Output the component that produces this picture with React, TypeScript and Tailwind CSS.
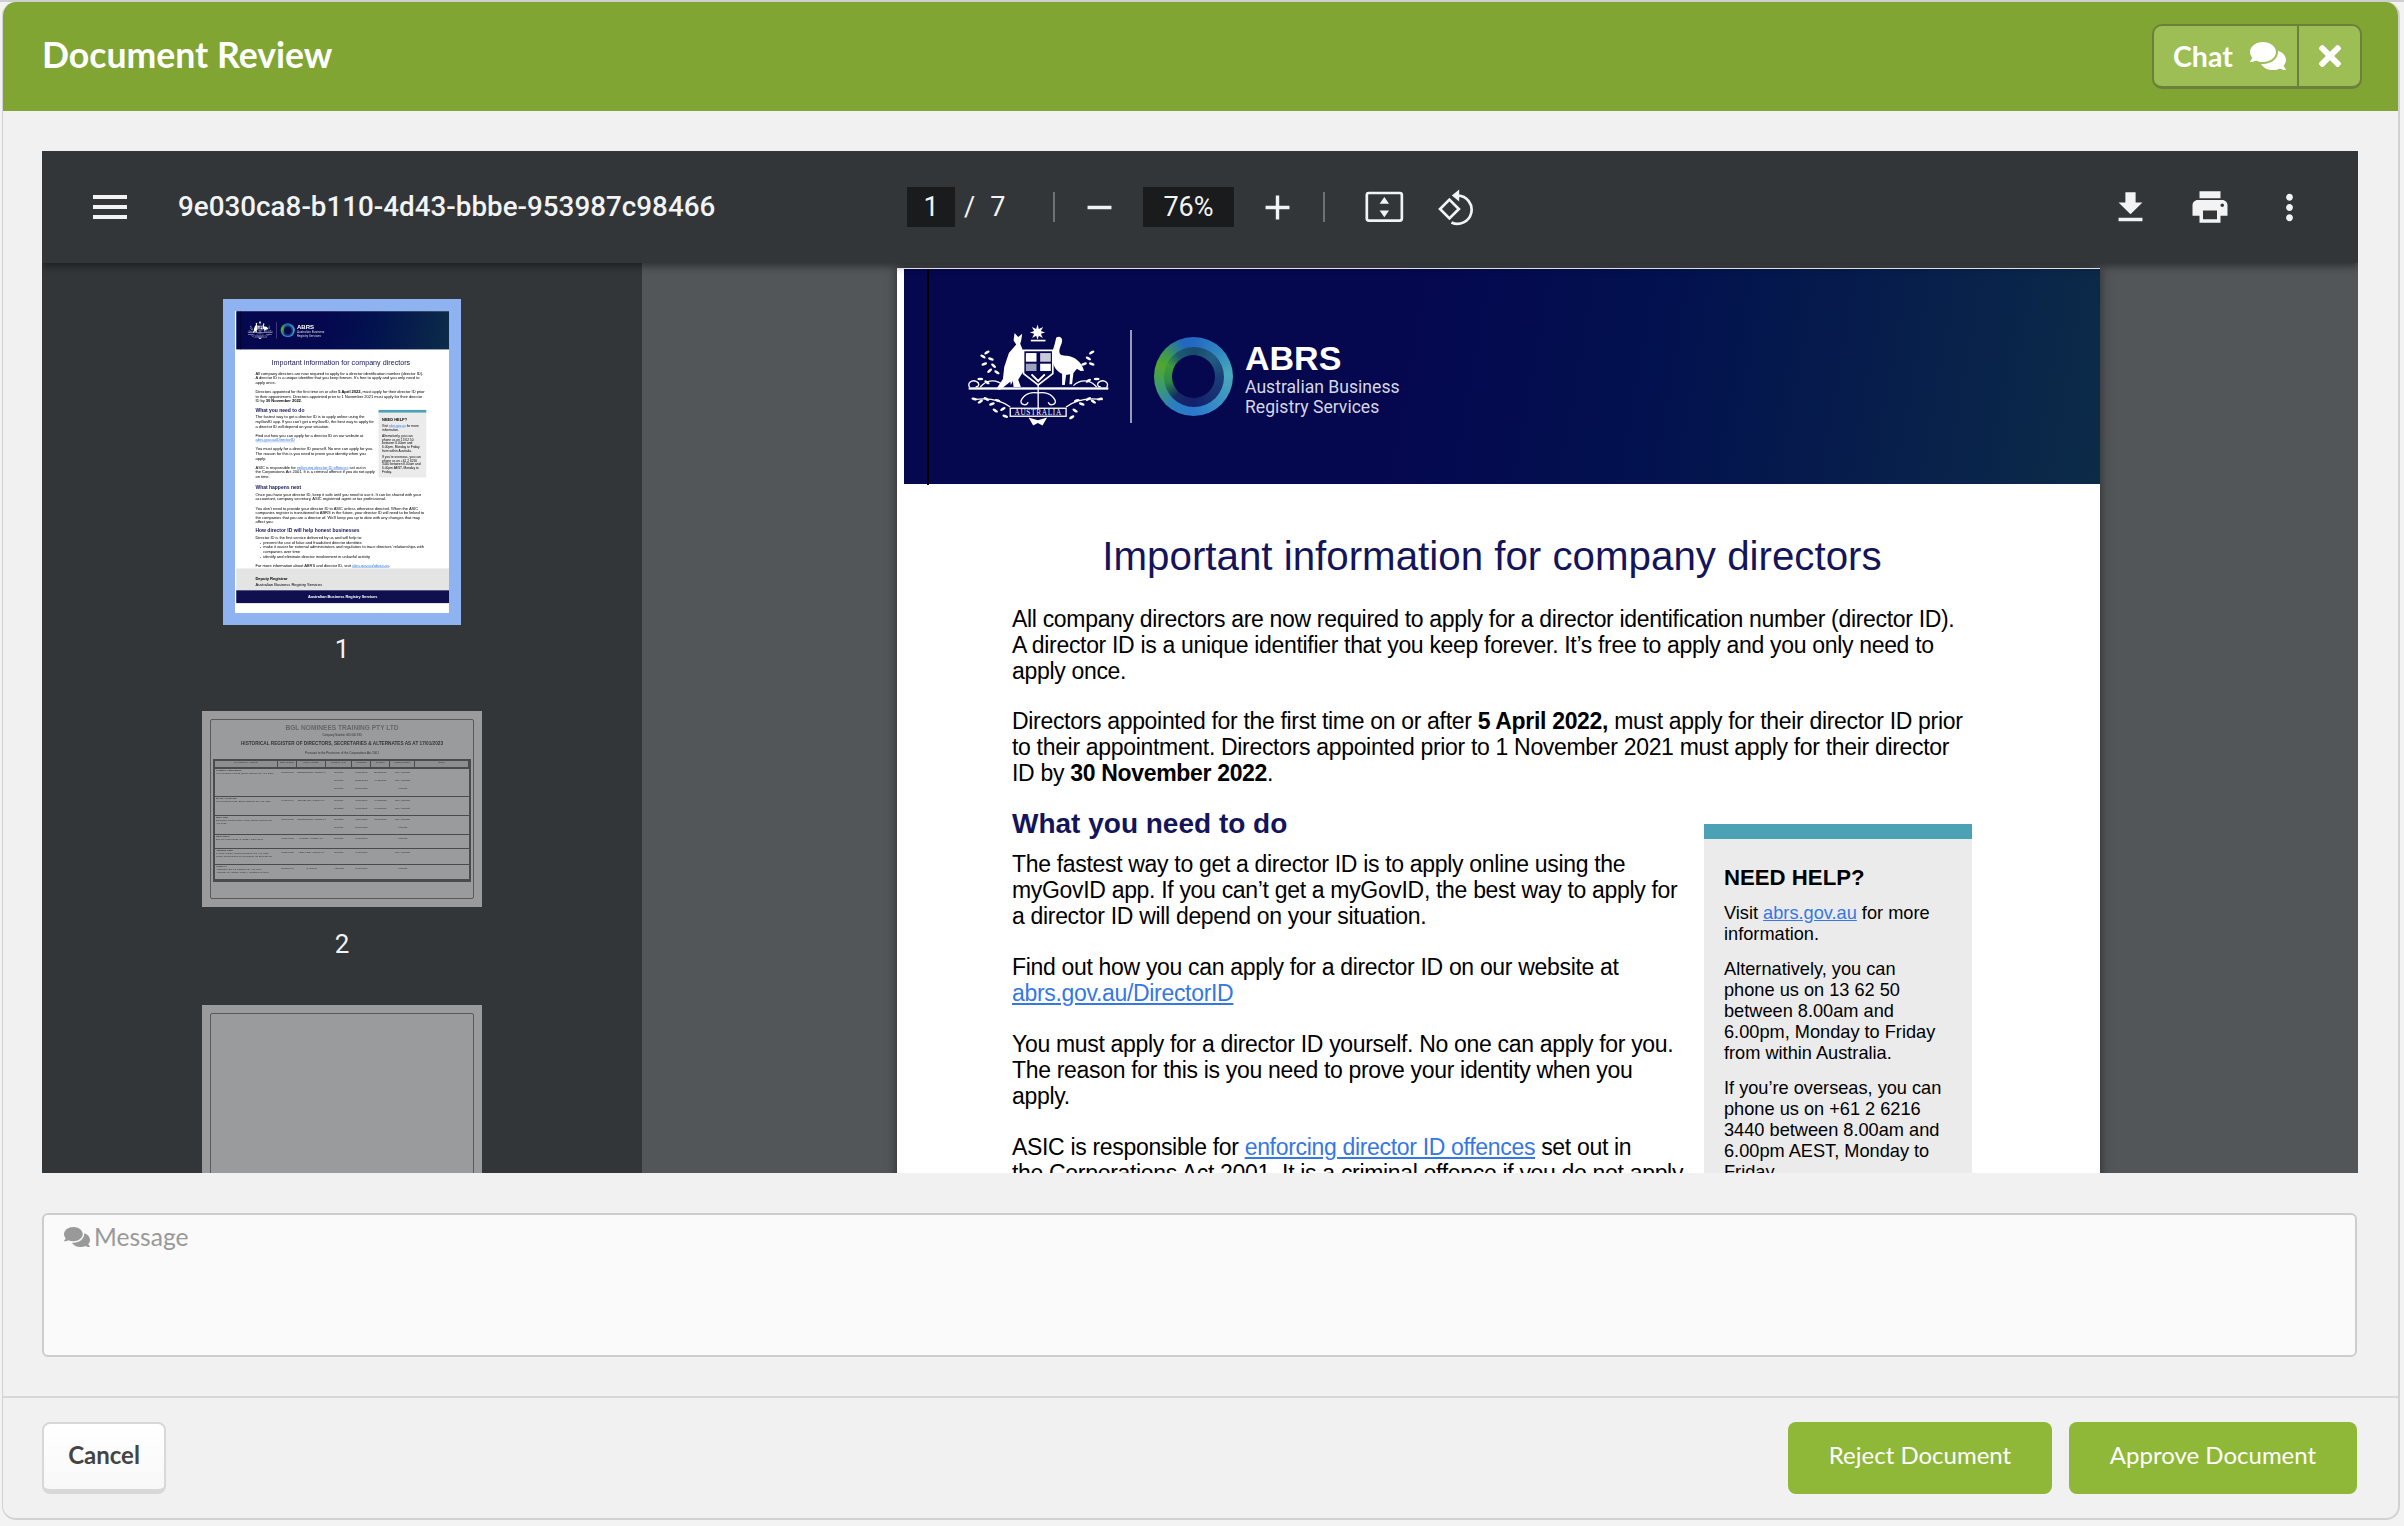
import { FaComments, FaTimes } from 'react-icons/fa';

const uiFont = "font-['Lato',sans-serif]";

// wattle sprigs of the crest, as [x, y, rotation]
const leaves = [
  [68, 112, 30], [80, 100, -30], [92, 120, 20], [72, 135, -20], [100, 140, 40], [88, 155, -40], [110, 160, 30],
  [395, 100, -30], [385, 118, 30], [372, 135, -20], [395, 135, 20], [360, 150, 30],
  [42, 240, 10], [60, 248, -30], [78, 240, 30], [95, 255, -20], [112, 245, 20], [128, 270, -30], [105, 275, 30], [135, 292, 20],
  [420, 240, -10], [400, 248, 30], [385, 240, -30], [365, 255, 20], [350, 245, -20], [345, 275, 30], [335, 295, -30],
  [60, 180, 0], [80, 190, 30], [410, 180, 0], [385, 185, -30],
];

function Crest() {
  return (
    <svg viewBox="20 15 430 315" className="w-[143px] h-[105px] shrink-0" fill="#fff">
      <polygon points="232,16 236,30 249,24 242,36 255,40 242,44 248,57 236,50 232,62 228,50 216,57 222,44 209,40 222,36 215,24 228,30" />
      <rect x="212" y="62" width="44" height="5" />
      <path d="M163 42l11 12 12-10-3 20-3 10 10 24 6 22-8 40-14 22 8 22h-22l-2-18-6 12-2-10-30 24-12-2 20-30 4-36 14-42 22-26-8-12z" />
      <path d="M288 56c8-6 18-2 18 8 0 12-10 22-8 36 2 10 10 8 22 10 24 2 46 20 52 46l-22-6-10 12-4 34h-8l2-30-12 2-4 30h-8l0-34c-14-6-28-20-30-46-2-22 8-36 12-62z" />
      <path d="M190 94h88v70l-44 34-44-34z" fill="#05074f" stroke="#fff" strokeWidth="5" />
      <rect x="197" y="102" width="32" height="26" fill="#fff" />
      <rect x="240" y="102" width="32" height="26" fill="#c8cad8" />
      <rect x="197" y="134" width="32" height="22" fill="#9ea1bd" />
      <rect x="240" y="134" width="32" height="22" fill="#fff" />
      <path d="M214 166l20 20 20-20" fill="none" stroke="#fff" strokeWidth="6" />
      <rect x="25" y="205" width="420" height="7" />
      <g fill="none" stroke="#fff" strokeWidth="4">
        <path d="M28 205c-8-12 6-24 20-18 12 6 8 18-2 16M440 205c8-12-6-24-20-18-12 6-8 18 2 16" />
        <path d="M60 204c20-24 50-24 70-4M410 204c-20-24-50-24-70-4" />
        <path d="M234 198v70M234 222c-20-4-40 2-50 20-8 14 14 22 20 8M234 222c20-4 40 2 50 20 8 14-14 22-20 8" />
        <path d="M40 242c40-6 80 0 110 22M428 242c-40-6-80 0-110 22" />
        <rect x="150" y="268" width="168" height="24" />
      </g>
      {leaves.map(([x, y, r]) => (
        <ellipse key={`${x}-${y}`} cx={x} cy={y} rx="9" ry="4" transform={`rotate(${r} ${x} ${y})`} />
      ))}
      <text x="234" y="288" textAnchor="middle" fontSize="22" fontFamily="Liberation Serif" letterSpacing="2">AUSTRALIA</text>
      <path d="M205 296l28 8 28-8-14 24-14-8-14 8z" />
    </svg>
  );
}

function Ring() {
  return (
    <div className="w-[79px] h-[79px] rounded-full shrink-0 flex items-center justify-center bg-[conic-gradient(from_0deg,#2468c4,#2f86c0_12%,#49a9bc_24%,#3b93c4_36%,#2a78cc_50%,#2b7ec0_60%,#3c9a70_70%,#50a82e_80%,#3f9a50_86%,#2268c0_95%,#2468c4)]">
      <div className="w-[60px] h-[60px] rounded-full flex items-center justify-center bg-[conic-gradient(from_0deg,#184a6c,#215d80_12%,#1a3f78_25%,#14206e_50%,#152a66_62%,#2f8a48_72%,#3f9c3c_82%,#1d5a70_90%,#184a6c)]">
        <div className="w-[43px] h-[43px] rounded-full bg-[#05074f]" />
      </div>
    </div>
  );
}

function DocPage() {
  return (
    <div className="w-[1203px] h-[1698px] flex flex-col bg-white pl-[7px] pt-px font-['Liberation_Sans',Arial,sans-serif] text-[23px] leading-[26px] tracking-[-0.32px] text-black whitespace-nowrap">
      <div className="relative h-[215px] shrink-0 bg-[linear-gradient(100deg,#05074f_40%,#02114f_62%,#0c2b48)] flex items-center pl-[63px] tracking-normal">
        <div className="absolute left-[23px] top-0 w-[2px] h-[216px] bg-black" />
        <Crest />
        <div className="w-[2px] h-[93px] bg-[#9a9bb8] ml-[20px] mr-[22px]" />
        <Ring />
        <div className="ml-[12px] text-white">
          <div className="text-[34px] leading-[38px] font-bold mt-[3px]">ABRS</div>
          <div className="text-[17.6px] leading-[20px] text-[#d5d7e4] font-['Roboto',sans-serif]">
            Australian Business
            <br />
            Registry Services
          </div>
        </div>
      </div>

      <div className="pl-[108px] w-[1068px]">
        <h1 className="pt-[50px] text-center text-[40.3px] leading-[46px] tracking-normal text-[#14145a]">Important information for company directors</h1>

        <p className="mt-[26px]">
          All company directors are now required to apply for a director identification number (director ID).
          <br />
          A director ID is a unique identifier that you keep forever. It’s free to apply and you only need to
          <br />
          apply once.
        </p>
        <p className="mt-[24px]">
          Directors appointed for the first time on or after <b>5 April 2022,</b> must apply for their director ID prior
          <br />
          to their appointment. Directors appointed prior to 1 November 2021 must apply for their director
          <br />
          ID by <b>30 November 2022</b>.
        </p>

        <div className="flex justify-between">
          <div>
            <h2 className="mt-[22px] text-[28px] leading-[32px] font-bold tracking-normal text-[#14145a]">What you need to do</h2>
            <p className="mt-[11px]">
              The fastest way to get a director ID is to apply online using the
              <br />
              myGovID app. If you can’t get a myGovID, the best way to apply for
              <br />
              a director ID will depend on your situation.
            </p>
            <p className="mt-[25px]">
              Find out how you can apply for a director ID on our website at
              <br />
              <a className="text-[#3577e5] underline">abrs.gov.au/DirectorID</a>
            </p>
            <p className="mt-[25px]">
              You must apply for a director ID yourself. No one can apply for you.
              <br />
              The reason for this is you need to prove your identity when you
              <br />
              apply.
            </p>
            <p className="mt-[25px]">
              ASIC is responsible for <a className="text-[#3577e5] underline">enforcing director ID offences</a> set out in
              <br />
              the Corporations Act 2001. It is a criminal offence if you do not apply
              <br />
              on time.
            </p>
          </div>

          <aside className="mt-[38px] w-[268px] h-[380px] bg-[#ebebeb] border-t-[15px] border-[#4aa2b4] pl-[20px] text-[18.2px] leading-[21px] tracking-normal">
            <h3 className="mt-[25px] text-[22.2px] leading-[28px] font-bold">NEED HELP?</h3>
            <p className="mt-[11px]">
              Visit <a className="text-[#3577e5] underline">abrs.gov.au</a> for more
              <br />
              information.
            </p>
            <p className="mt-[14px]">
              Alternatively, you can
              <br />
              phone us on 13 62 50
              <br />
              between 8.00am and
              <br />
              6.00pm, Monday to Friday
              <br />
              from within Australia.
            </p>
            <p className="mt-[14px]">
              If you’re overseas, you can
              <br />
              phone us on +61 2 6216
              <br />
              3440 between 8.00am and
              <br />
              6.00pm AEST, Monday to
              <br />
              Friday.
            </p>
          </aside>
        </div>

        <h2 className="mt-[31px] text-[28px] leading-[32px] font-bold tracking-normal text-[#14145a]">What happens next</h2>
        <p className="mt-[11px]">
          Once you have your director ID, keep it safe until you need to use it. It can be shared with your
          <br />
          accountant, company secretary, ASIC registered agent or tax professional.
        </p>
        <p className="mt-[25px]">
          You don’t need to provide your director ID to ASIC unless otherwise directed. When the ASIC
          <br />
          companies register is transitioned to ABRS in the future, your director ID will need to be linked to
          <br />
          the companies that you are a director of. We’ll keep you up to date with any changes that may
          <br />
          affect you.
        </p>
        <h2 className="mt-[20px] text-[28px] leading-[32px] font-bold tracking-normal text-[#14145a]">How director ID will help honest businesses</h2>
        <p className="mt-[11px]">Director ID is the first service delivered by us and will help to:</p>
        <ul className="pl-[44px] list-['-__'] list-outside">
          <li>prevent the use of false and fraudulent director identities</li>
          <li>
            make it easier for external administrators and regulators to trace directors’ relationships with
            <br />
            companies over time
          </li>
          <li>identify and eliminate director involvement in unlawful activity</li>
        </ul>
        <p className="mt-[25px]">
          For more information about ABRS and director ID, visit <a className="text-[#3577e5] underline">abrs.gov.au/about-us</a>.
        </p>
      </div>

      <div className="mt-auto h-[123px] shrink-0 bg-[#e4e4e4] pl-[108px] pt-[45px]">
        <b>Deputy Registrar</b>
        <div className="mt-[8px]">Australian Business Registry Services</div>
      </div>
      <div className="h-[72px] mb-[56px] shrink-0 bg-[#101050] flex items-center justify-center text-[22px] text-white font-bold">Australian Business Registry Services</div>
    </div>
  );
}

const registerRows = [
  { name: 'JAMES LADDS BERG', addr: ['6/46 Newhaven Road, BRIGHTON EAST, VIC 3187'], h: 'h-[28px]', lines: [['13/08/1965', 'MELBOURNE AUSTRALIA', 'Director', '01/06/2009', '25/05/2017', 'Non Alternate'], ['', '', 'Director', '27/11/2018', '04/12/2019', 'Non Alternate'], ['', '', 'Director', '15/06/2020', '', 'Alternate']] },
  { name: 'MARK ALLWARD', addr: ['6/46 Newhaven Rd, BRIGHTON EAST, VIC 3187'], h: 'h-[19px]', lines: [['14/10/1964', 'BRISBANE AUSTRALIA', 'Director', '01/06/2009', '04/05/2020', 'Non Alternate'], ['', '', 'Secretary', '01/06/2009', '04/05/2017', 'Non Alternate']] },
  { name: 'Mary Tran', addr: ['Brookside Court Centre House, BRIGHTON EAST,', 'VIC 3188'], h: 'h-[19px]', lines: [['03/09/1981', 'MELBOURNE AUSTRALIA', 'Secretary', '05/06/2011', '03/10/2017', 'Non Alternate'], ['', '', 'Director', '15/06/2020', '', 'Alternate']] },
  { name: 'Ron Lowell', addr: ['200 Toll Plaza Road, SYDNEY, NSW 2000'], h: 'h-[14px]', lines: [['01/01/1965', 'SYDNEY AUSTRALIA', 'Director', '06/10/2017', '', 'Alternate']] },
  { name: 'Anthony Goth', addr: ['1 Lorne Lesser, NORTHCOTE EAST, VIC 3120', 'Power Coappointed on 30/10/2019 as alternate for'], h: 'h-[16px]', lines: [['01/01/1985', 'ADELAIDE AUSTRALIA', 'Director', '04/10/2019', '', 'Non Alternate']] },
  { name: 'Grant Ali', addr: ['Ashburton, B/F 96 GOLDSAID, VIC 3146', 'Alternate for Anthony Goth, 4 Months over three'], h: 'h-[15px]', lines: [['20/08/1945', 'CYPRUS', 'Alternate', '06/10/2019', '', 'Alternate']] },
];

function RegisterThumb() {
  return (
    <div className="w-[280px] h-[196px] shrink-0 bg-[#9a9b9c] p-[8px] text-[#333435] font-['Liberation_Sans',sans-serif] whitespace-nowrap blur-[0.35px]">
      <div className="h-[180px] border border-[#58595a] rounded-[2px] text-center">
        <div className="mt-[3px] text-[6.6px] leading-[9px] font-bold text-[#66676a]">BGL NOMINEES TRAINING PTY LTD</div>
        <div className="mt-[1px] text-[2.8px] leading-[5px]">Company Number 000 000 330</div>
        <div className="mt-[2px] text-[4.7px] leading-[7px] font-bold">HISTORICAL REGISTER OF DIRECTORS, SECRETARIES &amp; ALTERNATES AS AT 17/01/2023</div>
        <div className="mt-[4px] text-[3px] leading-[5px]">Pursuant to the Provisions of the Corporations Act 2001</div>
        <div className="mx-[2px] mt-[3px] border-2 border-[#4a4b4c] text-[2.5px] leading-[3px]">
          <div className="grid grid-cols-[63px_19px_29px_26px_19px_19px_25px_54px] h-[8px] border-b-2 border-[#4a4b4c] items-center bg-[#8d8e8f] [&>span]:border-r [&>span]:border-[#4a4b4c] [&>span]:h-full">
            <span>Full Name &amp; Address</span>
            <span>Date of Birth</span>
            <span>Place of Birth</span>
            <span>Position Held</span>
            <span>Appointed</span>
            <span>Ceased</span>
            <span>Holding Status</span>
            <span>Notes</span>
          </div>
          {registerRows.map(row => (
            <div key={row.name} className={`${row.h} flex border-b border-[#4a4b4c] overflow-hidden`}>
              <div className="w-[63px] shrink-0 text-left pl-[1px] overflow-hidden">
                <b>{row.name}</b>
                {row.addr.map(a => (
                  <div key={a}>{a}</div>
                ))}
              </div>
              <div className="flex-1">
                {row.lines.map((line, i) => (
                  <div key={i} className="grid grid-cols-[19px_29px_26px_19px_19px_25px_54px] pt-[2px] pb-[3px]">
                    {line.map((cell, j) => (
                      <span key={j} className="overflow-hidden">{cell}</span>
                    ))}
                  </div>
                ))}
              </div>
            </div>
          ))}
        </div>
      </div>
    </div>
  );
}

function Sidebar() {
  return (
    <div className="w-[600px] shrink-0 bg-[#323639] overflow-hidden flex flex-col items-center pt-[48px] font-['Roboto',sans-serif] text-[#f1f3f4] text-[26px]">
      <div className="w-[214px] h-[302px] shrink-0 outline-[12px] outline-[#8fb3f0] overflow-hidden">
        <div className="w-[1203px] h-[1698px] origin-top-left scale-[0.1779] blur-[2.2px]">
          <DocPage />
        </div>
      </div>
      <div className="h-[98px] shrink-0 pt-[20px] leading-[32px]">1</div>
      <RegisterThumb />
      <div className="h-[98px] shrink-0 pt-[21px] leading-[32px]">2</div>
      <div className="w-[280px] h-[196px] shrink-0 bg-[#9a9b9c] p-[8px]">
        <div className="h-[180px] border border-[#58595a] rounded-[2px]" />
      </div>
    </div>
  );
}

function ToolIcon({ d, size }: { d: string; size: string }) {
  return (
    <svg viewBox="0 0 24 24" fill="#f1f3f4" className={`${size} shrink-0`}>
      <path d={d} />
    </svg>
  );
}

function Toolbar() {
  return (
    <div className="relative z-10 h-[112px] shrink-0 bg-[#323639] shadow-[0_3px_8px_rgba(0,0,0,0.45)] flex items-center text-[#f1f3f4] font-['Roboto',sans-serif] text-[27px]">
      <div className="ml-[51px] w-[34px] flex flex-col gap-[6px]">
        <div className="h-[4px] bg-[#f1f3f4]" />
        <div className="h-[4px] bg-[#f1f3f4]" />
        <div className="h-[4px] bg-[#f1f3f4]" />
      </div>
      <div className="ml-[51px] w-[729px] font-medium text-[27.8px] whitespace-nowrap">9e030ca8-b110-4d43-bbbe-953987c98466</div>

      <div className="w-[48px] h-[40px] bg-[#191b1c] flex items-center justify-center">1</div>
      <div className="w-[98px] pl-[9px] flex gap-[15px]">
        <span>/</span>
        <span>7</span>
      </div>
      <div className="w-[2px] h-[30px] bg-[#6f7275]" />
      <div className="ml-[24px]">
        <ToolIcon size="w-[41px] h-[41px]" d="M19 13H5v-2h14v2z" />
      </div>
      <div className="ml-[23px] w-[91px] h-[40px] bg-[#191b1c] flex items-center justify-center">76%</div>
      <div className="ml-[23px]">
        <ToolIcon size="w-[41px] h-[41px]" d="M19 13h-6v6h-2v-6H5v-2h6V5h2v6h6v2z" />
      </div>
      <div className="ml-[25px] w-[2px] h-[30px] bg-[#6f7275]" />
      <svg viewBox="75 48 115 95" className="ml-[40px] w-[39px] h-[32px] shrink-0">
        <rect x="80" y="54" width="104" height="82" rx="6" fill="none" stroke="#f1f3f4" strokeWidth="8" />
        <path d="M132 66l14 20h-28zM118 106h28l-14 20z" fill="#f1f3f4" />
      </svg>
      <svg viewBox="290 38 110 112" className="ml-[33px] w-[37px] h-[38px] shrink-0" fill="none" stroke="#f1f3f4" strokeWidth="8">
        <path d="M327 72l28 28-28 28-28-28z" />
        <path d="M352 60a42 42 0 1 1-19 80" />
        <path d="M356 42v36l-22-18z" fill="#f1f3f4" stroke="none" />
      </svg>

      <div className="ml-auto mr-[48px] flex items-center gap-[38px]">
        <ToolIcon size="w-[41px] h-[41px]" d="M19 9h-4V3H9v6H5l7 7 7-7zM5 18v2h14v-2H5z" />
        <ToolIcon size="w-[42px] h-[42px]" d="M19 8H5c-1.66 0-3 1.34-3 3v6h4v4h12v-4h4v-6c0-1.66-1.34-3-3-3zm-3 11H8v-5h8v5zm3-7c-.55 0-1-.45-1-1s.45-1 1-1 1 .45 1 1-.45 1-1 1zm-1-9H6v4h12V3z" />
        <ToolIcon size="w-[41px] h-[41px]" d="M12 8c1.1 0 2-.9 2-2s-.9-2-2-2-2 .9-2 2 .9 2 2 2zm0 2c-1.1 0-2 .9-2 2s.9 2 2 2 2-.9 2-2-.9-2-2-2zm0 6c-1.1 0-2 .9-2 2s.9 2 2 2 2-.9 2-2-.9-2-2-2z" />
      </div>
    </div>
  );
}

export default function App() {
  return (
    <div className={`w-[2404px] h-[1526px] bg-[#f3f3f3] border-t-2 border-[#cfcfcf] pl-[2px] ${uiFont}`}>
      <div className="w-[2398px] h-[1518px] bg-[#f1f1f1] rounded-[14px] border-l border-r-2 border-b-2 border-[#d2d2d2] overflow-hidden flex flex-col">
        <header className="h-[109px] shrink-0 bg-[#80a532] flex items-center justify-between pl-[39px] pr-[36px]">
          <h1 className="text-[35.6px] leading-[40px] mb-[3px] font-bold text-white">Document Review</h1>
          <div className="w-[210px] h-[65px] flex bg-[#9dbd55] border-2 border-b-[3px] border-[#6c7f3c] rounded-[10px] text-white">
            <button className="w-[145px] flex items-center pl-[19px] gap-[16px] text-[28.5px] font-bold border-r-2 border-[#6c7f3c]">
              Chat
              <FaComments className="w-[38px] h-[32px]" />
            </button>
            <button className="flex-1 flex items-center justify-center">
              <FaTimes className="w-[28px] h-[32px]" />
            </button>
          </div>
        </header>

        <div className="flex-1 flex flex-col pl-[39px] pr-[40px] pt-[40px]">
          <div className="h-[1022px] shrink-0 flex flex-col overflow-hidden">
            <Toolbar />
            <div className="flex-1 flex overflow-hidden">
              <Sidebar />
              <div className="flex-1 bg-[#525659] overflow-hidden pl-[255px] pt-[5px]">
                <div className="w-[1203px] shadow-[0_0_10px_rgba(0,0,0,0.5)]">
                  <DocPage />
                </div>
              </div>
            </div>
          </div>

          <div className="mt-[40px] mr-[1px] h-[144px] shrink-0 bg-[#fafafa] border-2 border-[#cdcdcd] rounded-[6px] pl-[20px] pt-[6px] flex items-start gap-[4px] text-[24.6px] leading-[32px] text-[#999]">
            <FaComments className="w-[26px] h-[24px] mt-[4px]" />
            Message
          </div>
        </div>

        <footer className="h-[122px] shrink-0 border-t-2 border-[#d8d8d8] flex items-start justify-between pl-[39px] pr-[41px] pt-[24px] text-[24px]">
          <button className="w-[124px] h-[72px] pb-[3px] bg-[linear-gradient(#fff,#f8f8f8)] border-2 border-b-[5px] border-[#d8d8d8] rounded-[8px] font-bold text-[#444]">Cancel</button>
          <div className="flex gap-[17px] text-white">
            <button className="w-[264px] h-[72px] pb-[6px] bg-[#8fb838] rounded-[8px] font-normal">Reject Document</button>
            <button className="w-[288px] h-[72px] pb-[6px] bg-[#8fb838] rounded-[8px] font-normal">Approve Document</button>
          </div>
        </footer>
      </div>
    </div>
  );
}
